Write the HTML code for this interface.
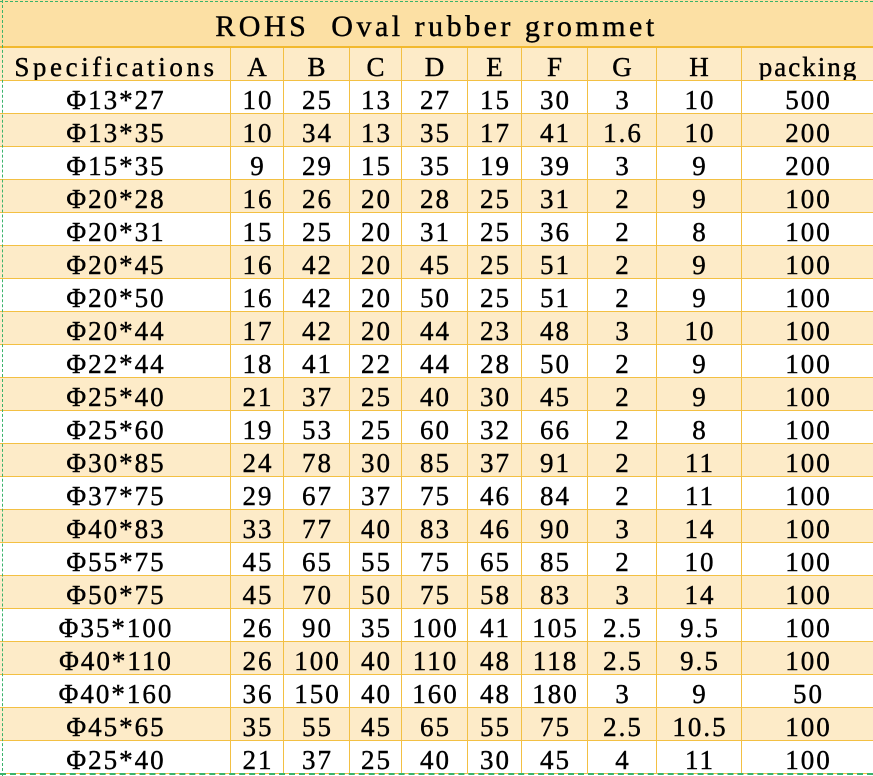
<!DOCTYPE html>
<html><head><meta charset="utf-8"><style>
body{margin:0;width:873px;height:776px;overflow:hidden;background:#fff;font-family:"Liberation Serif","Noto Serif CJK SC",serif;color:#000;position:relative}
.title{position:absolute;left:0;top:0;width:873px;height:46px;background:#fce0a4;border-bottom:2px solid #f2b92e;text-align:center;font-size:30px;letter-spacing:3.5px;line-height:54px;white-space:pre;-webkit-text-stroke:0.4px #000}
.r{position:absolute;left:0;width:873px;height:33px;display:flex;box-sizing:border-box;border-bottom:1px solid #f3c043}
.r.y{background:#fdebc8}
.r div{box-sizing:border-box;border-right:1px solid #f3c043;text-align:center;font-size:27px;letter-spacing:2px;line-height:38px;white-space:nowrap;overflow:hidden;padding-left:2px;-webkit-text-stroke:0.4px #000}
.r div:last-child{border-right:none}
.c0{width:231px}.c1{width:53px}.c2{width:66px}.c3{width:52px}.c4{width:66px}.c5{width:54px}.c6{width:66px}.c7{width:69px}.c8{width:85px}.c9{width:131px}
.dash{position:absolute;border-color:#3bb36b;border-style:dashed;border-width:0}
</style></head><body>
<div class="title">ROHS  Oval rubber grommet</div>
<div id="t"></div>
<script>
var d=[["Specifications","A","B","C","D","E","F","G","H","packing"],
["Φ13*27",10,25,13,27,15,30,3,10,500],["Φ13*35",10,34,13,35,17,41,"1.6",10,200],["Φ15*35",9,29,15,35,19,39,3,9,200],
["Φ20*28",16,26,20,28,25,31,2,9,100],["Φ20*31",15,25,20,31,25,36,2,8,100],["Φ20*45",16,42,20,45,25,51,2,9,100],
["Φ20*50",16,42,20,50,25,51,2,9,100],["Φ20*44",17,42,20,44,23,48,3,10,100],["Φ22*44",18,41,22,44,28,50,2,9,100],
["Φ25*40",21,37,25,40,30,45,2,9,100],["Φ25*60",19,53,25,60,32,66,2,8,100],["Φ30*85",24,78,30,85,37,91,2,11,100],
["Φ37*75",29,67,37,75,46,84,2,11,100],["Φ40*83",33,77,40,83,46,90,3,14,100],["Φ55*75",45,65,55,75,65,85,2,10,100],
["Φ50*75",45,70,50,75,58,83,3,14,100],["Φ35*100",26,90,35,100,41,105,"2.5","9.5",100],["Φ40*110",26,100,40,110,48,118,"2.5","9.5",100],
["Φ40*160",36,150,40,160,48,180,3,9,50],["Φ45*65",35,55,45,65,55,75,"2.5","10.5",100],["Φ25*40",21,37,25,40,30,45,4,11,100]];
var h="";
d.forEach(function(r,i){h+='<div class="r'+(i%2==0?' y':'')+'" style="top:'+(48+33*i)+'px">';
r.forEach(function(c,j){h+='<div class="c'+j+'"'+(i==0&&j==0?' style="letter-spacing:3.6px"':'')+'>'+c+'</div>';});h+='</div>';});
document.getElementById('t').innerHTML=h;
</script>
<div class="dash" style="left:0;top:1px;width:873px;border-top-width:1px"></div>
<div class="dash" style="left:2px;top:0;height:776px;border-left-width:1px"></div>
<div class="dash" style="left:0;top:773px;width:873px;border-top-width:2px"></div>
</body></html>
